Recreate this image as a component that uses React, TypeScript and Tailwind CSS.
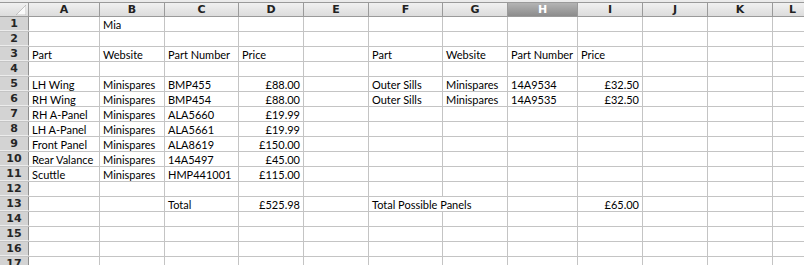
import React from 'react';

const cols = ['A', 'B', 'C', 'D', 'E', 'F', 'G', 'H', 'I', 'J', 'K', 'L'];
const widths = ['w-[71px]', 'w-[65px]', 'w-[74px]', 'w-[65px]', 'w-[65px]', 'w-[74px]', 'w-[65px]', 'w-[70px]', 'w-[65px]', 'w-[65px]', 'w-[65px]', 'w-[40px]'];

type Cell = { v: string; right?: boolean; span?: number };
type Row = Record<number, Cell>;

const rows: Row[] = [
  { 1: { v: 'Mia' } },
  {},
  { 0: { v: 'Part' }, 1: { v: 'Website' }, 2: { v: 'Part Number' }, 3: { v: 'Price' }, 5: { v: 'Part' }, 6: { v: 'Website' }, 7: { v: 'Part Number' }, 8: { v: 'Price' } },
  {},
  { 0: { v: 'LH Wing' }, 1: { v: 'Minispares' }, 2: { v: 'BMP455' }, 3: { v: '£88.00', right: true }, 5: { v: 'Outer Sills' }, 6: { v: 'Minispares' }, 7: { v: '14A9534' }, 8: { v: '£32.50', right: true } },
  { 0: { v: 'RH Wing' }, 1: { v: 'Minispares' }, 2: { v: 'BMP454' }, 3: { v: '£88.00', right: true }, 5: { v: 'Outer Sills' }, 6: { v: 'Minispares' }, 7: { v: '14A9535' }, 8: { v: '£32.50', right: true } },
  { 0: { v: 'RH A-Panel' }, 1: { v: 'Minispares' }, 2: { v: 'ALA5660' }, 3: { v: '£19.99', right: true } },
  { 0: { v: 'LH A-Panel' }, 1: { v: 'Minispares' }, 2: { v: 'ALA5661' }, 3: { v: '£19.99', right: true } },
  { 0: { v: 'Front Panel' }, 1: { v: 'Minispares' }, 2: { v: 'ALA8619' }, 3: { v: '£150.00', right: true } },
  { 0: { v: 'Rear Valance' }, 1: { v: 'Minispares' }, 2: { v: '14A5497' }, 3: { v: '£45.00', right: true } },
  { 0: { v: 'Scuttle' }, 1: { v: 'Minispares' }, 2: { v: 'HMP441001' }, 3: { v: '£115.00', right: true } },
  {},
  { 2: { v: 'Total' }, 3: { v: '£525.98', right: true }, 5: { v: 'Total Possible Panels', span: 2 }, 8: { v: '£65.00', right: true } },
  {},
  {},
  {},
  {},
];

function SheetRow({ n, row }: { n: number; row: Row }) {
  const cells: React.ReactNode[] = [];
  for (let i = 0; i < cols.length; i++) {
    const c = row[i];
    if (c && c.span === 2) {
      cells.push(
        <div key={i} className="w-[139px] shrink-0 h-full border-r border-[#c4c4c4] px-[3px] whitespace-nowrap overflow-hidden">
          {c.v}
        </div>
      );
      i++;
      continue;
    }
    cells.push(
      <div
        key={i}
        className={`${widths[i]} shrink-0 h-full border-r border-[#c4c4c4] px-[3px] whitespace-nowrap overflow-hidden ${c?.right ? 'text-right' : 'text-left'}`}
      >
        {c?.v}
      </div>
    );
  }
  return (
    <div className="flex h-[15px] border-b border-[#c4c4c4] leading-[16px]">
      <div
        className="w-[29px] shrink-0 h-full bg-[#d3d3d3] border-r border-[#8e8e8e] text-center font-bold text-[11px] text-[#262626] leading-[14px] border-b border-b-[#ececec] -mb-px"
        style={{ fontFamily: '"DejaVu Sans", sans-serif' }}
      >
        {n}
      </div>
      {cells}
    </div>
  );
}

export default function App() {
  return (
    <div
      className="w-[804px] h-[265px] overflow-hidden bg-white text-[11px] text-black"
      style={{ fontFamily: 'Lato, "Liberation Sans", sans-serif' }}
    >
      <div className="h-[2px] bg-[#ebebeb]" />
      <div
        className="flex h-[15px] border-t border-b border-[#9a9a9a] bg-gradient-to-b from-[#f1f1f1] to-[#dcdcdc] text-[11px] font-bold text-[#222]"
        style={{ fontFamily: '"DejaVu Sans", sans-serif' }}
      >
        <div className="relative w-[29px] shrink-0 h-full border-r border-[#9a9a9a]">
          <svg className="absolute right-[2px] bottom-[1px]" width="10" height="10" viewBox="0 0 10 10">
            <path d="M10 0 L10 10 L0 10 Z" fill="#fafafa" stroke="#b8b8b8" strokeWidth="0.8" />
          </svg>
        </div>
        {cols.map((c, i) => (
          <div
            key={c}
            className={`${widths[i]} shrink-0 h-full border-r border-[#9a9a9a] text-center leading-[13px] ${
              c === 'H' ? 'bg-gradient-to-b from-[#b4b4b4] to-[#8c8c8c] text-white' : ''
            }`}
          >
            {c}
          </div>
        ))}
      </div>
      {rows.map((r, idx) => (
        <SheetRow key={idx} n={idx + 1} row={r} />
      ))}
    </div>
  );
}
